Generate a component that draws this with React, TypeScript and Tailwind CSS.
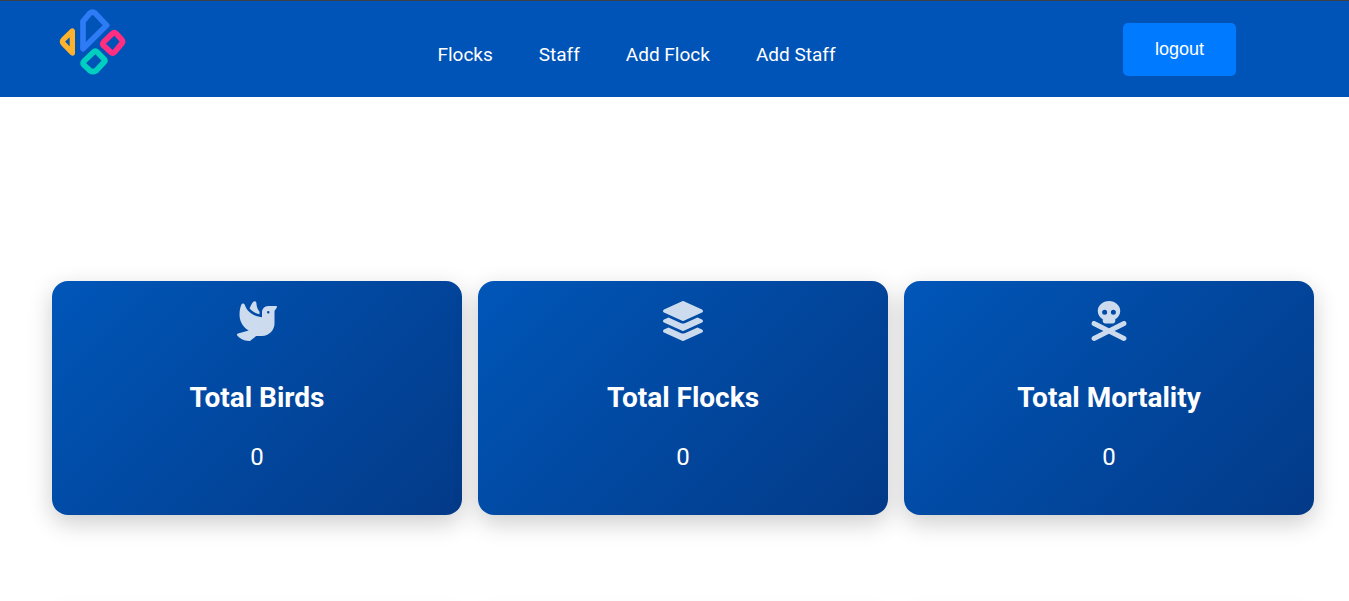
import type { IconType } from "react-icons";
import { FaLayerGroup } from "react-icons/fa";
import { FaDove, FaSkullCrossbones } from "react-icons/fa6";

const links = ["Flocks", "Staff", "Add Flock", "Add Staff"];

const stats: { title: string; value: number; Icon: IconType }[] = [
  { title: "Total Birds", value: 0, Icon: FaDove },
  { title: "Total Flocks", value: 0, Icon: FaLayerGroup },
  { title: "Total Mortality", value: 0, Icon: FaSkullCrossbones },
];

const cardClass =
  "min-h-[234px] rounded-2xl bg-linear-[135deg,#0056b8,#033a88] p-5 text-center text-white shadow-[0_8px_25px_rgba(0,0,0,0.2)]";

function Logo() {
  return (
    <svg
      viewBox="55 25 207 204"
      className="h-[68px] w-[69px]"
      fill="none"
      strokeWidth="17"
      strokeLinejoin="round"
      aria-hidden="true"
    >
      <path stroke="#2f7bf6" d="M130 144V62L150 38Q158 31 167 38L201 74Z" />
      <path stroke="#ffb32c" strokeWidth="16" d="M98 91V157L71 129Q66 123 71 117Z" />
      <path stroke="#ff2e80" d="M218 99Q224 93 230 99L246 117Q251 123 246 129L225 154Q219 160 213 154L192 135Q187 130 192 124Z" />
      <path stroke="#00cfc0" d="M161 155Q167 149 173 155L193 175Q198 180 193 185L169 210Q160 216 151 210L133 193Q128 188 133 182Z" />
    </svg>
  );
}

export default function App() {
  return (
    <div className="h-screen overflow-hidden bg-white font-[Roboto,sans-serif]">
      <header className="flex h-[97px] items-start justify-between border-t border-[#3c3f44] bg-[#0054b8] pr-[113px] pl-[58px]">
        <a href="#" aria-label="Home" className="mt-2 w-[92px]">
          <Logo />
        </a>
        <nav className="mt-10 flex gap-[46px] text-[19px] leading-7 text-white">
          {links.map((label) => (
            <a key={label} href="#">
              {label}
            </a>
          ))}
        </nav>
        <button
          type="button"
          className="mt-[22px] rounded-[5px] bg-[#007bff] px-8 py-4 font-['Liberation_Sans',Arial,sans-serif] text-lg leading-[21px] text-white"
        >
          logout
        </button>
      </header>
      <main className="grid grid-cols-3 gap-x-4 gap-y-24 pt-[184px] pr-[35px] pl-[52px]">
        {stats.map(({ title, value, Icon }) => (
          <section key={title} className={cardClass}>
            <Icon className="mx-auto size-10 opacity-80" />
            <h2 className="mt-10 text-[28px] leading-[34px] font-bold">{title}</h2>
            <p className="mt-[26px] text-2xl leading-8">{value}</p>
          </section>
        ))}
        {stats.map(({ title }) => (
          <section key={title + "-detail"} className={cardClass} />
        ))}
      </main>
    </div>
  );
}
